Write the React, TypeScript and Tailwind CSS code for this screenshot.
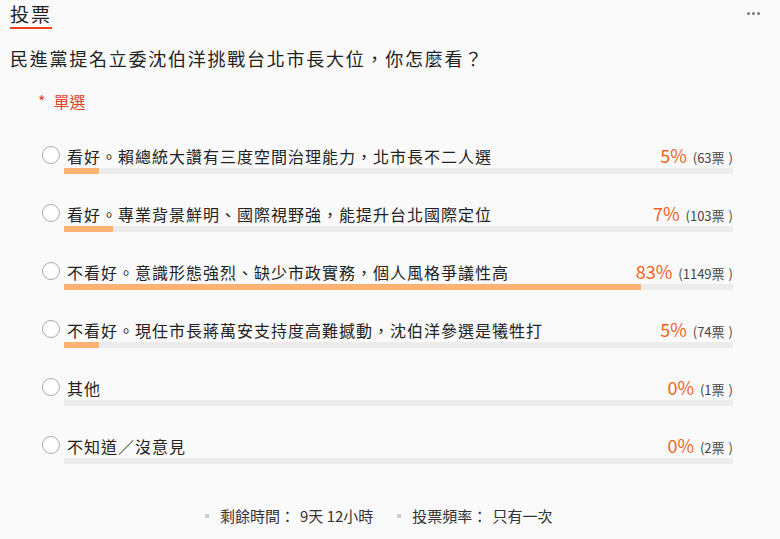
const font = { fontFamily: '"Noto Sans CJK TC", "Noto Sans", sans-serif' };

type Option = { label: string; percent: number; votes: number; bar: number };

// bar 為畫面上實際長條比例
const options: Option[] = [
  { label: '看好。賴總統大讚有三度空間治理能力，北市長不二人選', percent: 5, votes: 63, bar: 5.2 },
  { label: '看好。專業背景鮮明、國際視野強，能提升台北國際定位', percent: 7, votes: 103, bar: 7.3 },
  { label: '不看好。意識形態強烈、缺少市政實務，個人風格爭議性高', percent: 83, votes: 1149, bar: 86.3 },
  { label: '不看好。現任市長蔣萬安支持度高難撼動，沈伯洋參選是犧牲打', percent: 5, votes: 74, bar: 5.2 },
  { label: '其他', percent: 0, votes: 1, bar: 0 },
  { label: '不知道／沒意見', percent: 0, votes: 2, bar: 0 },
];

export default function App() {
  return (
    <div className="w-[780px] h-[539px] bg-[#fafafa] text-[#222] px-[10px] overflow-hidden" style={font}>
      {/* 標題 */}
      <div className="flex items-start justify-between">
        <span className="inline-block pt-[2px] pb-[1px] text-[19px] leading-[24px] tracking-[2px] border-b-2 border-[#e8411c]">
          投票
        </span>
        <div className="flex gap-[2px] mt-[12px] mr-[10px]">
          <span className="w-[3px] h-[3px] rounded-full bg-[#777]" />
          <span className="w-[3px] h-[3px] rounded-full bg-[#777]" />
          <span className="w-[3px] h-[3px] rounded-full bg-[#777]" />
        </div>
      </div>

      <div className="mt-[15px] text-[18px] leading-[28px] tracking-[1.75px]">
        民進黨提名立委沈伯洋挑戰台北市長大位，你怎麼看？
      </div>

      <div className="mt-[17px] ml-[28px] text-[16px] leading-[24px] text-[#e0452b]">
        <span className="mr-[8px]">*</span>單選
      </div>

      {/* 選項 */}
      <div className="mt-[30px] flex flex-col gap-[27px]">
        {options.map((o) => (
          <div key={o.label} className="flex">
            <div className="w-[54px] flex justify-end pr-[4px]">
              <span className="mt-[3px] w-[18px] h-[18px] rounded-full border border-[#aaa] bg-white" />
            </div>
            <div className="w-[669px]">
              <div className="flex items-baseline justify-between h-[24px]">
                <span className="pl-[3px] text-[16px] leading-[24px] tracking-[1px]">{o.label}</span>
                <span className="flex items-baseline">
                  <span className="text-[18px] leading-[24px] text-[#f0641e]">{o.percent}%</span>
                  <span className="ml-[6px] text-[13px] text-[#444]">
                    ({o.votes}票<span className="ml-[4px]">)</span>
                  </span>
                </span>
              </div>
              <div className="mt-[1px] h-[6px] bg-[#ececec]">
                <div className="h-full bg-[#ffb272]" style={{ width: `${o.bar}%` }} />
              </div>
            </div>
          </div>
        ))}
      </div>

      {/* 底部資訊 */}
      <div className="mt-[42px] pl-[195px] flex items-center text-[15px] leading-[20px] text-[#333]">
        <span className="w-[4px] h-[4px] bg-[#ccc] mr-[11px]" />
        <span>剩餘時間：</span>
        <span className="ml-[5px]">9天 12小時</span>
        <span className="w-[4px] h-[4px] bg-[#ccc] ml-[24px] mr-[11px]" />
        <span>投票頻率：</span>
        <span className="ml-[5px]">只有一次</span>
      </div>
    </div>
  );
}
